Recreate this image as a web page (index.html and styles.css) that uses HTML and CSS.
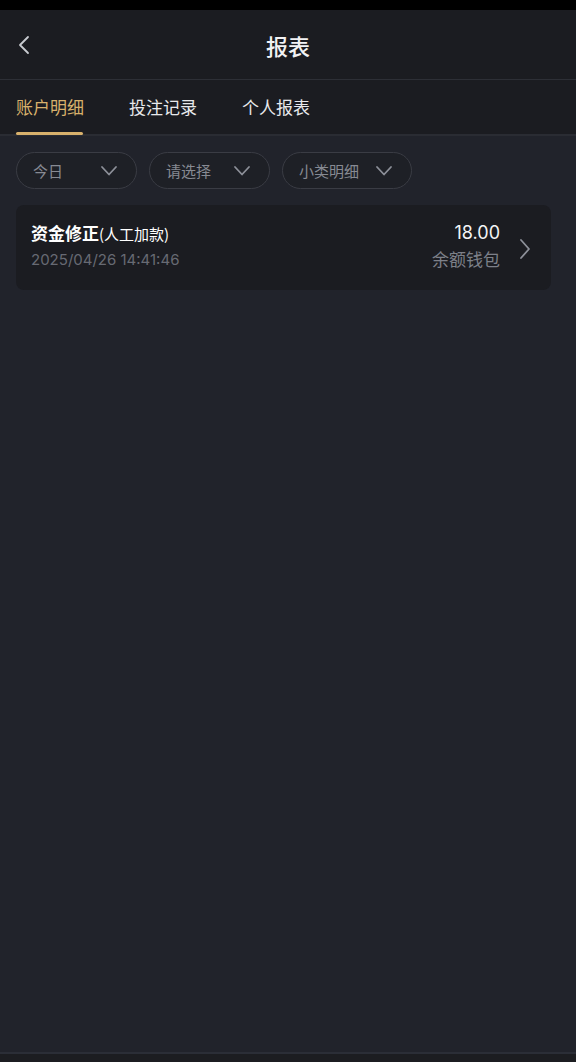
FILE: index.html
```html
<!DOCTYPE html>
<html lang="zh">
<head>
<meta charset="utf-8">
<link rel="stylesheet" href="styles.css">
</head>
<body>
<div class="page">
  <div class="statusbar"></div>
  <header class="header">
    <span class="back">
      <svg width="14" height="20" viewBox="0 0 14 20"><path d="M11 2 L3 10 L11 18" fill="none" stroke="#c9cbd1" stroke-width="1.8" stroke-linecap="round" stroke-linejoin="round"/></svg>
    </span>
    <h1 class="title">报表</h1>
  </header>
  <nav class="tabs">
    <div class="tab active">账户明细</div>
    <div class="tab">投注记录</div>
    <div class="tab">个人报表</div>
  </nav>
  <main class="content">
    <div class="filters">
      <div class="pill"><span>今日</span><svg class="chev" width="18" height="12" viewBox="0 0 18 12"><path d="M2 2 L9 9.5 L16 2" fill="none" stroke="#8d9099" stroke-width="1.8" stroke-linecap="round" stroke-linejoin="round"/></svg></div>
      <div class="pill"><span>请选择</span><svg class="chev" width="18" height="12" viewBox="0 0 18 12"><path d="M2 2 L9 9.5 L16 2" fill="none" stroke="#8d9099" stroke-width="1.8" stroke-linecap="round" stroke-linejoin="round"/></svg></div>
      <div class="pill"><span>小类明细</span><svg class="chev" width="18" height="12" viewBox="0 0 18 12"><path d="M2 2 L9 9.5 L16 2" fill="none" stroke="#8d9099" stroke-width="1.8" stroke-linecap="round" stroke-linejoin="round"/></svg></div>
    </div>
    <div class="card">
      <div class="card-left">
        <div class="card-title"><b>资金修正</b><span class="sub">(人工加款)</span></div>
        <div class="card-date">2025/04/26 14:41:46</div>
      </div>
      <div class="card-right">
        <div class="amount">18.00</div>
        <div class="wallet">余额钱包</div>
      </div>
      <svg class="arrow" width="14" height="22" viewBox="0 0 14 22"><path d="M3 2 L11 11 L3 20" fill="none" stroke="#8d9099" stroke-width="1.8" stroke-linecap="round" stroke-linejoin="round"/></svg>
    </div>
  </main>
  <div class="bottom"></div>
</div>
</body>
</html>
```
FILE: styles.css
```css
* { box-sizing: border-box; }
html, body { margin: 0; padding: 0; }
body {
  background: #21232b;
  font-family: "Noto Sans CJK SC", "Noto Sans", sans-serif;
  color: #fff;
}
.page {
  width: 576px;
  height: 1062px;
  display: flex;
  flex-direction: column;
  background: #21232b;
}
.statusbar { height: 10px; background: #000; flex: none; }
.header {
  height: 70px;
  flex: none;
  background: #1b1c21;
  border-bottom: 1px solid #2d2f36;
  display: flex;
  align-items: center;
  justify-content: center;
  position: relative;
}
.back {
  position: absolute;
  left: 17px;
  top: 25px;
  display: flex;
}
.title {
  margin: 0;
  font-size: 22px;
  font-weight: 500;
  color: #f2f2f4;
  line-height: 1;
}
.tabs {
  height: 56px;
  flex: none;
  background: #1b1c21;
  border-bottom: 2px solid #2a2c33;
  display: flex;
  gap: 45px;
  padding: 0 16px;
}
.tab {
  font-size: 17px;
  color: #e8e9ec;
  display: flex;
  align-items: center;
  position: relative;
  padding-bottom: 1px;
}
.tab.active { color: #d8b16c; }
.tab.active::after {
  content: "";
  position: absolute;
  left: 0;
  right: 1px;
  bottom: -1px;
  height: 3px;
  border-radius: 2px;
  background: #d8b16c;
}
.content {
  flex: 1;
  padding: 16px 25px 0 16px;
  display: flex;
  flex-direction: column;
  gap: 16px;
}
.filters { display: flex; gap: 12px; }
.pill {
  height: 37px;
  min-width: 121px;
  border: 1px solid #3a3c44;
  border-radius: 19px;
  background: #1e2026;
  display: flex;
  align-items: center;
  justify-content: space-between;
  gap: 16px;
  padding: 0 18px 1px 16px;
  font-size: 15px;
  color: #878a93;
}
.chev { display: block; margin-top: 1px; }
.card {
  height: 85px;
  background: #1b1c21;
  border-radius: 8px;
  display: flex;
  align-items: center;
  padding: 0 19px 4px 15px;
}
.card-left { flex: 1; display: flex; flex-direction: column; gap: 4px; }
.card-title { font-size: 17px; color: #fff; line-height: 24px; }
.card-title b { font-weight: 700; }
.card-title .sub { font-size: 15px; font-weight: 400; }
.card-date { font-size: 15px; color: #676a73; line-height: 20px; font-family: "Inter", "Noto Sans CJK SC", sans-serif; }
.card-right { display: flex; flex-direction: column; align-items: flex-end; gap: 2px; margin-right: 18px; }
.amount { font-size: 18px; color: #f4f4f6; line-height: 24px; font-family: "Inter", "Noto Sans", sans-serif; }
.wallet { font-size: 17px; color: #7d8089; line-height: 24px; }
.arrow { display: block; margin-top: 6px; }
.bottom {
  height: 10px;
  flex: none;
  background: #1c1d21;
  border-top: 2px solid #2b2e37;
}
```
